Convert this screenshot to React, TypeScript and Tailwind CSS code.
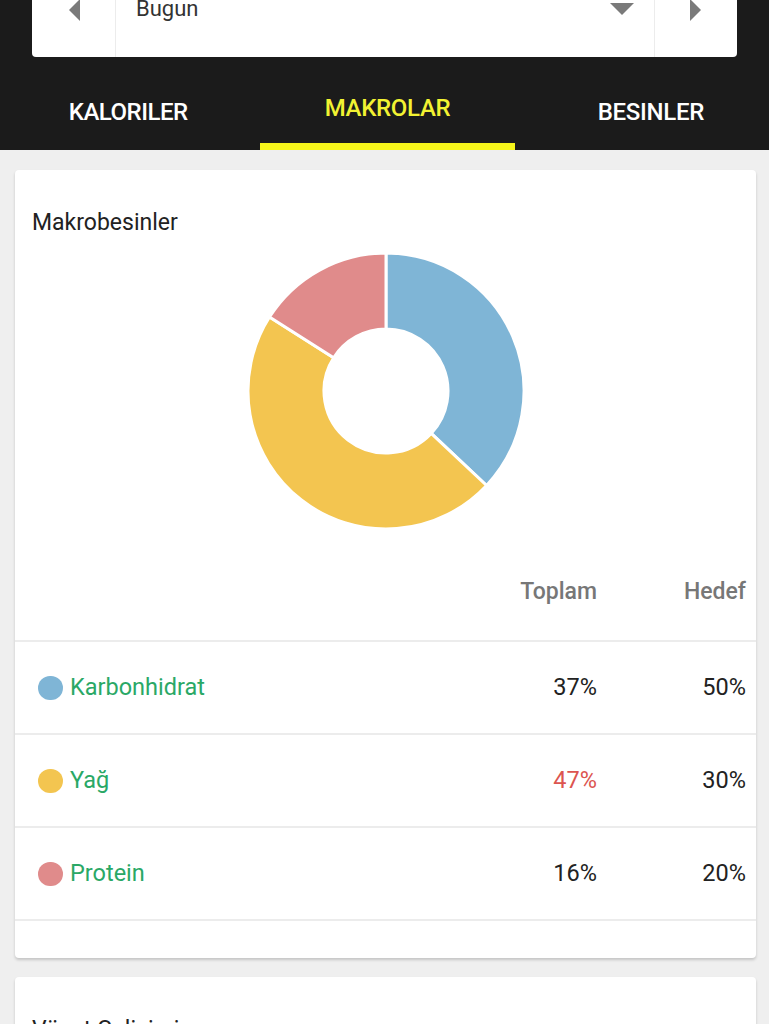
import React from 'react';

const macros = [
  { name: 'Karbonhidrat', color: '#7fb5d6', total: 37, goal: 50, over: false },
  { name: 'Yağ', color: '#f3c550', total: 47, goal: 30, over: true },
  { name: 'Protein', color: '#e08b8b', total: 16, goal: 20, over: false },
];

// donut slice path, angles in degrees clockwise from top
const slice = (cx: number, cy: number, r: number, ri: number, a0: number, a1: number) => {
  const p = (rad: number, a: number) => {
    const t = ((a - 90) * Math.PI) / 180;
    return `${(cx + rad * Math.cos(t)).toFixed(2)} ${(cy + rad * Math.sin(t)).toFixed(2)}`;
  };
  const large = a1 - a0 > 180 ? 1 : 0;
  return `M${p(r, a0)} A${r} ${r} 0 ${large} 1 ${p(r, a1)} L${p(ri, a1)} A${ri} ${ri} 0 ${large} 0 ${p(ri, a0)} Z`;
};

const Donut: React.FC = () => {
  let start = 0;
  return (
    <svg width="280" height="280" viewBox="0 0 280 280">
      {macros.map((m) => {
        const end = start + (m.total / 100) * 360;
        const d = slice(140, 140, 138, 62, start, end);
        start = end;
        return <path key={m.name} d={d} fill={m.color} stroke="#ffffff" strokeWidth="3" strokeLinejoin="round" />;
      })}
    </svg>
  );
};

export default function App() {
  return (
    <div className="w-[769px] h-[1024px] overflow-hidden bg-[#efefef] font-['Roboto',sans-serif]">
      {/* Header */}
      <div className="bg-[#1b1b1b] h-[150px] flex flex-col">
        <div className="mx-[32px] -mt-[30px] h-[87px] bg-white rounded-b-[4px] flex">
          <div className="w-[84px] h-full border-r border-[#ececec] flex justify-center pt-[28px]">
            <svg width="14" height="24" viewBox="0 0 14 24"><path d="M13 1 L2 12 L13 23 Z" fill="#7a7a7a" /></svg>
          </div>
          <div className="flex-1 h-[76px] flex items-center justify-between pl-[20px] pr-[19px]">
            <span className="text-[22px] text-[#333]">Bugun</span>
            <svg width="26" height="14" viewBox="0 0 26 14" className="mt-[2px]"><path d="M1 1 L25 1 L13 13 Z" fill="#7a7a7a" /></svg>
          </div>
          <div className="w-[83px] h-full border-l border-[#ececec] flex justify-center pt-[28px]">
            <svg width="14" height="24" viewBox="0 0 14 24"><path d="M1 1 L12 12 L1 23 Z" fill="#7a7a7a" /></svg>
          </div>
        </div>
        <div className="flex-1 grid grid-cols-3">
          <div className="flex items-center justify-center text-white text-[24px] font-medium tracking-[-0.5px] pt-[16px]">KALORILER</div>
          <div className="flex flex-col">
            <div className="flex-1 flex items-center justify-center text-[#f2f232] text-[24px] font-medium tracking-[-0.3px] pt-[16px] pl-[6px]">MAKROLAR</div>
            <div className="h-[7px] bg-[#f5f51a] ml-[4px] mr-[-2px]" />
          </div>
          <div className="flex items-center justify-center text-white text-[24px] font-medium tracking-[-0.3px] pt-[16px] pl-[20px]">BESINLER</div>
        </div>
      </div>

      {/* Macro card */}
      <div className="mt-[20px] ml-[15px] mr-[13px] bg-white rounded-[4px] shadow-[0_2px_3px_rgba(0,0,0,0.18)]">
        <div className="pt-[39px] pl-[17px] text-[23px] leading-[28px] text-[#222]">Makrobesinler</div>
        <div className="flex justify-center mt-[14px]">
          <Donut />
        </div>
        <div className="h-[111px] flex items-end pb-[34px] pr-[10px] border-b-2 border-[#ececec] text-[23px] leading-[28px] text-[#777] font-medium">
          <div className="flex-1" />
          <div className="w-[120px] text-right">Toplam</div>
          <div className="w-[149px] text-right">Hedef</div>
        </div>
        {macros.map((m) => (
          <div key={m.name} className="h-[93px] flex items-center pl-[23px] pr-[10px] border-b-2 border-[#ececec] text-[23.5px]">
            <div className="flex-1 flex items-center gap-[7px]">
              <span className="w-[25px] h-[24px] rounded-full" style={{ backgroundColor: m.color }} />
              <span className="text-[#2aa866]">{m.name}</span>
            </div>
            <div className={`w-[120px] text-right ${m.over ? 'text-[#dc5550]' : 'text-[#222]'}`}>{m.total}%</div>
            <div className="w-[149px] text-right text-[#222]">{m.goal}%</div>
          </div>
        ))}
        <div className="h-[37px]" />
      </div>

      {/* Next card */}
      <div className="mt-[19px] ml-[15px] mr-[13px] h-[200px] bg-white rounded-[4px] shadow-[0_2px_3px_rgba(0,0,0,0.18)]">
        <div className="pt-[39px] pl-[17px] text-[23px] leading-[28px] text-[#222]">Vücut Gelişimi</div>
      </div>
    </div>
  );
}
